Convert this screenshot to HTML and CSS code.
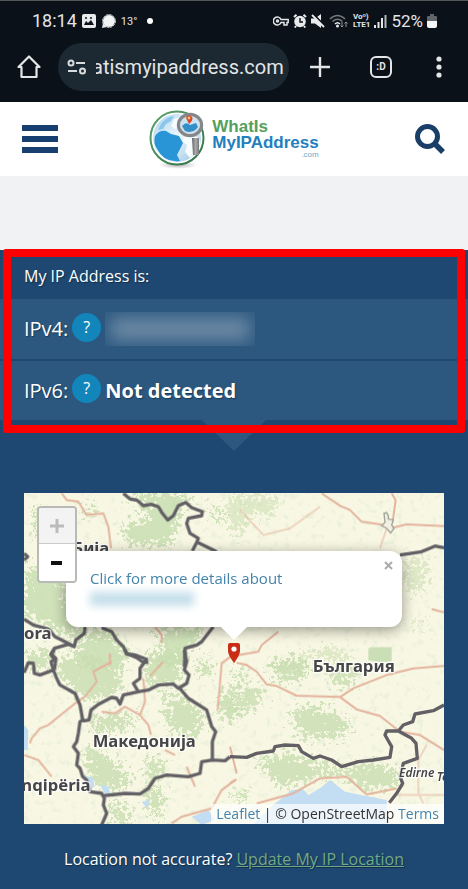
FILE: index.html
```html
<!DOCTYPE html>
<html lang="en">
<head>
<meta charset="utf-8">
<meta name="viewport" content="width=device-width, initial-scale=1">
<title>What Is My IP Address</title>
<link rel="stylesheet" href="styles.css">
</head>
<body>
<header class="phone">
  <div class="status">
    <div class="status-left">
      <span class="clock">18:14</span>
      <svg width="14" height="14" viewBox="0 0 14 14"><rect width="14" height="14" rx="2" fill="#e8eaec"/><path d="M2 11L4 7L6 9L9 6L12 11Z" fill="#0b1118"/><circle cx="4" cy="4" r="1" fill="#0b1118"/><circle cx="9" cy="4" r="1" fill="#0b1118"/></svg>
      <svg width="15" height="15" viewBox="0 0 15 15"><circle cx="8" cy="7" r="6" fill="#f1f3f4"/><circle cx="8" cy="7" r="6.400" fill="none" stroke="#e1e4e6" stroke-dasharray="2.500 .800"/><path d="M2 9L1 14L6 13Z" fill="#e8eaec"/></svg>
      <span class="temp">13°</span>
      <i class="dot"></i>
    </div>
    <div class="status-right">
      <svg width="16" height="12" viewBox="0 0 16 12" fill="none" stroke="#e3e5e7" stroke-width="1.5"><path d="M8 4.5A4 4 0 1 0 8 7.5H11V10H14V7.5H15.2V4.5Z"/><circle cx="4.5" cy="6" r="1"/></svg>
      <svg width="14" height="14" viewBox="0 0 14 14"><circle cx="7" cy="7.500" r="5.800" fill="#e8eaec"/><path d="M1 3L3.500 .8M13 3L10.500 .8M3 12L1.800 13.500M11 12L12.200 13.500" stroke="#e8eaec" stroke-width="2"/><path d="M7 4V8H10" fill="none" stroke="#0b1118" stroke-width="1.400"/></svg>
      <svg width="14" height="14" viewBox="0 0 14 14"><path d="M0 4.500H4L10 0V14L4 9.500H0Z" fill="#e8eaec"/><path d="M1 -1L15 13" stroke="#0b1118" stroke-width="2"/><path d="M1 1L13 13" stroke="#e8eaec" stroke-width="1.800"/></svg>
      <svg width="20" height="14" viewBox="0 0 20 14" fill="none"><path d="M1 5Q8.500 -2 16 5M3.500 7.500Q8.500 3 13.500 7.500" stroke="#71777c" stroke-width="1.600"/><path d="M6 10Q8.500 7.500 11 10" stroke="#e8eaec" stroke-width="1.600"/><circle cx="8.500" cy="12" r="1.500" fill="#e8eaec"/><path d="M13 8V13M11.500 11.500L13 13L14.500 11.500M17 13V8M15.500 9.500L17 8L18.500 9.500" stroke="#8d9296"/></svg>
      <span class="volte">Voᵒ)<br>LTE1</span>
      <svg width="13" height="13" viewBox="0 0 13 13" fill="#e3e5e7"><path d="M0 10H2V13H0ZM3.500 7H5.500V13H3.500ZM7 3H9V13H7Z"/><path d="M10.500 0H12.500V13H10.500Z" fill="#b4b8bb"/></svg>
      <span class="percent">52%</span>
      <svg width="10" height="14" viewBox="0 0 10 14"><path d="M3 0H7V2H9Q10 2 10 3V7H0V3Q0 2 1 2H3Z" fill="#5f656a"/><path d="M0 7H10V12Q10 14 8 14H2Q0 14 0 12Z" fill="#f4f5f6"/></svg>
    </div>
  </div>
  <nav class="browser" aria-label="Browser">
    <button class="tool home" aria-label="Home"><svg width="24" height="24" viewBox="0 0 24 24" fill="none" stroke="#e3e5e7" stroke-width="2.200" stroke-linejoin="round"><path d="M1.500 12L12 1.500L22.500 12H19.500V22H4.500V12Z"/></svg></button>
    <div class="address">
      <svg width="20" height="16" viewBox="0 0 20 16" fill="none" stroke="#d8dcdf" stroke-width="2"><circle cx="4" cy="4" r="2.500"/><path d="M9 4H18M1 12H10"/><circle cx="15.500" cy="12" r="2.500"/></svg>
      <input class="url" aria-label="Address" value="atismyipaddress.com">
    </div>
    <button class="tool" aria-label="New tab"><svg width="20" height="20" viewBox="0 0 20 20"><path d="M10 0V20M0 10H20" stroke="#e3e5e7" stroke-width="2.400"/></svg></button>
    <button class="tool" aria-label="Tabs"><span class="tabs">:D</span></button>
    <button class="tool menu" aria-label="More"><svg width="6" height="22" viewBox="0 0 6 22" fill="#e3e5e7"><circle cx="3" cy="3" r="2.600"/><circle cx="3" cy="11" r="2.600"/><circle cx="3" cy="19" r="2.600"/></svg></button>
  </nav>
</header>

<div class="site-head">
  <button class="tool" aria-label="Menu"><svg width="36" height="28" viewBox="0 0 36 28"><path d="M0 0H36V6H0ZM0 11H36V17H0ZM0 22H36V28H0Z" fill="#173f70"/></svg></button>
  <a class="logo" href="#">
    <svg width="60" height="60" viewBox="0 0 60 60">
      <defs>
        <linearGradient id="rim" x1="0" y1="0" x2="1" y2="1"><stop offset="0" stop-color="#5fa36b"/><stop offset="1" stop-color="#2d7148"/></linearGradient>
        <linearGradient id="sea" x1="0" y1="0" x2="1" y2="1"><stop offset="0" stop-color="#a9d2ee"/><stop offset=".5" stop-color="#eef8fe"/><stop offset="1" stop-color="#8fbfe2"/></linearGradient>
        <radialGradient id="shade"><stop offset="0" stop-color="#777" stop-opacity=".6"/><stop offset="1" stop-color="#999" stop-opacity="0"/></radialGradient>
        <linearGradient id="grip"><stop offset="0" stop-color="#5e6062"/><stop offset=".5" stop-color="#aaa"/><stop offset="1" stop-color="#77797b"/></linearGradient>
      </defs>
      <ellipse cx="29" cy="56" rx="20" ry="4" fill="url(#shade)"/>
      <circle cx="28" cy="29" r="26.500" fill="#fff" stroke="url(#rim)" stroke-width="2"/>
      <circle cx="28" cy="29" r="24" fill="url(#sea)"/>
      <path d="M6 27Q10 21 17 22L22 25L30 27L34 34L30 42L28 46L31 52Q15 54 8 40Q4 34 6 27Z" fill="#2994d6"/>
      <path d="M12 15Q17 8 25 7L22 12L17 15L14 20L9 21Z" fill="#8cc6ea"/>
      <path d="M25 10L34 8L30 17L26 20L22 17ZM36 27L43 26L50 29L51 35Q48 43 41 49L36 43L38 36L33 32Z" fill="#f7fcff"/>
      <path d="M43 29H50V46H44Z" fill="url(#grip)"/>
      <ellipse cx="41" cy="16" rx="11.500" ry="10.500" fill="#c9e5f5" stroke="#85888b" stroke-width="3.400"/>
      <ellipse cx="41" cy="16" rx="9.500" ry="8.500" fill="none" stroke="#d7dadd"/>
      <path d="M33 17Q37 12 41 16L47 14L49 18Q44 25 36 22Z" fill="#348fc9"/>
      <path d="M40 15L37 9Q38 5 42 7Q45 9 42 13Z" fill="#d9482b"/><circle cx="40" cy="9" r="1.400" fill="#f6c36b"/>
    </svg>
    <span class="wordmark"><span class="what">WhatIs</span><span class="my">MyIPAddress</span><span class="com">.com</span></span>
  </a>
  <button class="tool" aria-label="Search"><svg width="30" height="30" viewBox="0 0 30 30" fill="none" stroke="#193f68"><circle cx="12.500" cy="12.500" r="10" stroke-width="5"/><path d="M20 20L28 28" stroke-width="5.500"/></svg></button>
</div>
<div class="ad"></div>

<main class="page">
  <section class="ip">
    <h1>My IP Address is:</h1>
    <div class="row"><span>IPv4:</span><button class="help" aria-label="About IPv4">?</button><span class="hidden-ip"><i></i></span></div>
    <div class="row"><span>IPv6:</span><button class="help" aria-label="About IPv6">?</button><strong>Not detected</strong></div>
    <i class="arrow"></i>
    <i class="highlight"></i>
  </section>

  <section class="map" aria-label="Map">
    <svg class="tiles" viewBox="0 0 1260 993" preserveAspectRatio="xMidYMid slice">
      <defs>
        <filter id="rough" x="-20%" y="-20%" width="140%" height="140%"><feTurbulence type="fractalNoise" baseFrequency=".08" numOctaves="4" seed="4" result="n"/><feDisplacementMap in="SourceGraphic" in2="n" scale="110" xChannelSelector="R" yChannelSelector="G"/><feGaussianBlur stdDeviation="2"/></filter>
        <filter id="speck" x="0" y="0" width="100%" height="100%"><feTurbulence type="fractalNoise" baseFrequency=".05" numOctaves="5" seed="8"/><feColorMatrix values="0 0 0 0 .76  0 0 0 0 .85  0 0 0 0 .66  6 0 0 0 -3.400"/></filter>
      </defs>
      <rect width="1260" height="993" fill="#f8f7e3"/>
      <rect width="1260" height="993" filter="url(#speck)" opacity=".5"/>
      <g filter="url(#rough)" fill="#c5dcae">
        <g transform="translate(-27 -24)" opacity=".8">
          <path d="M340 25H530L500 60L470 180H340L320 120L410 100ZM30 260L100 230L150 290L160 400L210 430L170 460L100 420L30 390ZM210 440L280 440L340 510L320 550H210L180 500ZM430 430H560L500 540H410L440 500ZM60 60L100 100L60 160ZM200 50L240 70L220 110ZM560 60L640 80L620 110Z"/>
        </g>
        <g transform="translate(618 -24)" opacity=".5">
          <path d="M0 30L150 40L120 100L60 80L30 160L0 130ZM530 220L600 230L570 330L520 300ZM220 500L300 485L340 500L360 530L240 520ZM130 540L220 510L240 560H120ZM540 405L590 415L560 430Z"/>
        </g>
        <g transform="translate(-27 471)" opacity=".75">
          <path d="M30 10L110 0L100 60L40 50ZM130 30L220 10L310 60L320 120L230 160L180 120L130 80ZM390 10L500 0L505 95L400 110ZM225 200L360 190L350 230L250 250ZM450 130L540 160L570 220L530 270L460 230ZM200 290L270 310L350 390L300 425L230 400ZM395 320L440 330L450 380L400 400ZM290 450L340 480L340 520H290ZM400 400L450 430L430 510L390 460ZM620 120L660 130V220L610 200ZM540 60L580 20L590 80Z"/>
        </g>
        <g transform="translate(618 471)" opacity=".75">
          <path d="M120 40L200 20L240 60L220 90L140 90ZM0 110L110 115L90 155L30 200H0V165L50 145L0 140ZM15 60L45 65V90L15 85ZM180 180L260 170L360 210L350 260L220 265ZM80 330L180 310L330 355L440 340L510 370L500 410L400 420L340 375L260 380L150 415ZM0 430L70 430L50 445H0ZM320 50H380L360 120L300 90Z"/>
        </g>
      </g>
      <path transform="translate(618 -24)" d="M415 490L425 486H485V528L455 532L415 526Z" fill="#cbdfb6"/>
      <g fill="#c3ddf3">
        <path transform="translate(618 471)" d="M130 465L185 420L220 418L235 435L270 415L300 390L345 425L470 450V530H60Z"/>
        <path transform="translate(-27 471)" d="M205 375L235 385L238 410L218 425ZM255 403L280 410L288 438L270 432ZM27 225L40 240L38 300H27ZM380 455L405 450L395 475ZM530 500L580 480L600 510L560 525Z"/>
      </g>
      <g fill="none" stroke="#e3b39d" stroke-width="6" stroke-linejoin="round">
        <path transform="translate(-27 -24)" d="M140 25L155 45L190 50L215 90L265 85L280 125L288 190M420 425L440 450V475M285 505V540"/>
        <path transform="translate(618 -24)" d="M275 25L330 62L360 75L395 110L450 118L490 128L530 118L642 123M485 25L497 45L488 110M0 515L85 500L95 480L145 440M605 372L642 382"/>
        <path transform="translate(618 -24)" d="M470 130L450 190M30 75L100 150L180 130L270 65" opacity=".5"/>
        <path transform="translate(-27 471)" d="M45 280L50 265L75 235L100 225L180 160L210 140L245 95L235 65L290 35M260 185L300 190L330 170L375 195L390 155L385 85M375 195L400 225L408 255M450 300L480 315M405 78L445 35M28 315L70 330L110 380M608 180L620 40L660 10M515 350L540 410M470 520L500 500L590 475L620 420L660 390"/>
        <path transform="translate(618 471)" d="M20 38L50 45L80 65L110 103L140 108L200 137L330 141L370 115L470 75L550 55L642 48M330 141L380 178L450 198L510 245L570 255L642 300M80 460L190 430L270 385L350 380L410 433L500 415M0 290L20 370M0 400L20 388"/>
        <path transform="translate(618 471)" d="M590 285L565 330V430L580 460M500 435H642" opacity=".5"/>
      </g>
      <g fill="none" stroke="#626065" stroke-width="10" stroke-linejoin="round">
        <path transform="translate(-27 -24)" d="M325 25L345 42L365 45L385 62L408 58L430 65L440 82L458 105L475 92L490 62L512 52L530 68L562 80L560 92L520 100L515 115L525 145L550 160L545 172L532 198M548 172L605 200M27 205L38 215L27 225M27 402L55 420L100 432L120 455L160 475L178 485M210 425L208 445L182 465L178 485L160 478L118 490L108 510L122 525L118 555M260 428L290 440L305 465L325 485L335 505L365 518L382 530L400 532M595 425L560 470L545 480L510 490L508 545"/>
        <path transform="translate(618 -24)" d="M510 210L575 200L615 183L642 188"/>
        <path transform="translate(-27 471)" d="M27 68L40 38L55 40L58 70L75 75L115 60L125 85L135 105L180 130L195 165L203 210L195 215L190 250L185 275L175 290L190 310L185 345L195 355L203 380L215 390L225 425L260 430L268 445L265 465L275 490L260 525M115 60L108 35L122 25L108 12L118 0M203 213L222 210L228 180L250 163L290 142L305 145L315 162L325 135L370 125L355 100L375 85L375 55L395 28L360 15L335 12L330 0M370 125L400 120L430 105L475 102L490 115L515 100L522 75L508 60L515 35L508 0M490 110L520 145L575 180L590 230L602 245L592 275V330L630 332L645 320M592 330L560 335L555 370L520 380L455 375L420 385L400 415L375 432L330 430L265 437"/>
        <path transform="translate(618 471)" d="M0 320L50 322L80 310L130 303L135 290L165 285L205 287L215 305L250 325L270 318L305 330L335 350L385 335L430 330L480 322L485 290L465 255L470 243L505 243L520 225L548 215L555 192L610 182L642 165M505 243L545 265L558 280L562 325L520 340L510 380L518 400L500 430L478 458"/>
      </g>
      <path transform="translate(618 -24)" d="M462 85L470 83L475 92V102L490 105L485 120L492 130L482 144L470 130L455 122L465 112Z" fill="#f2efe3" stroke="#a1a398" stroke-width="4"/>
      <g class="labels">
        <text x="145" y="184">Бија</text>
        <text x="0" y="438">ora</text>
        <text x="206" y="762">Македонија</text>
        <text x="866" y="536">България</text>
        <text x="-8" y="894">nqipëria</text>
        <text class="city" x="1125" y="852">Edirne</text>
        <text class="city" x="1238" y="864">Te</text>
      </g>
    </svg>
    <div class="zoom"><button disabled aria-label="Zoom in"><svg width="14" height="14"><path d="M7 0V14M0 7H14" stroke="#bcbcbc" stroke-width="3"/></svg></button><button aria-label="Zoom out"><svg width="12" height="14"><path d="M0 7H11" stroke="#111" stroke-width="4"/></svg></button></div>
    <svg class="pin" width="14" height="22" viewBox="0 0 14 22"><path d="M1 3Q1 1 3 1H11Q13 1 13 3V9Q13 13 7 21Q1 13 1 9Z" fill="#c92d16"/><circle cx="7" cy="7" r="2.600" fill="#fff"/></svg>
    <div class="popup">
      <a href="#">Click for more details about</a>
      <i class="hidden-detail"></i>
      <button class="close" aria-label="Close popup"><svg width="9" height="9"><path d="M1 1L8 8M8 1L1 8" stroke="#aaa" stroke-width="2"/></svg></button>
    </div>
    <div class="credit"><a href="#">Leaflet</a> | © OpenStreetMap <a href="#">Terms</a></div>
  </section>
  <p class="accuracy">Location not accurate? <a href="#">Update My IP Location</a></p>
</main>
</body>
</html>
```
FILE: styles.css
```css
* { box-sizing: border-box; }
body { margin: 0; min-height: 100vh; display: flex; flex-direction: column; background: #1e4871; color: #fff; font-family: "Open Sans", "Noto Sans", sans-serif; }
svg { display: block; flex: none; }
button { border: 0; padding: 0; background: none; font-family: inherit; }
a { text-decoration: none; }

.phone { background: #0b1118; border-top: 1px solid #54575a; font-family: Roboto, sans-serif; color: #e3e5e7; }
.status { height: 40px; display: flex; justify-content: space-between; align-items: center; padding: 0 31px 0 32px; }
.status-left, .status-right { display: flex; align-items: center; gap: 5px; }
.clock { font-size: 18px; line-height: 20px; }
.temp { font-size: 11px; }
.dot { width: 6px; height: 6px; margin-left: 5px; border-radius: 50%; background: #fff; }
.status-right { gap: 4px; }
.volte { font-size: 8px; line-height: 8px; font-weight: 700; }
.percent { font-size: 17px; line-height: 20px; }
.browser { height: 61px; display: flex; align-items: center; padding: 0 26px 9px 17px; gap: 17px; }
.tool { flex: none; display: flex; align-items: center; justify-content: center; }
.browser .tool { width: 28px; margin-right: 16px; }
.browser .home { width: 24px; margin: 0; }
.browser .menu { width: 6px; margin: 0 0 0 8px; }
.address { flex: 1; min-width: 0; height: 48px; padding: 0 4px 0 9px; border-radius: 24px; background: #1c2932; display: flex; align-items: center; gap: 9px; }
.url { flex: 1; min-width: 0; padding: 0; border: 0; background: none; outline: 0; color: #e3e5e7; font: 20px/24px Roboto, sans-serif; text-indent: -4px; }
.tabs { width: 22px; height: 22px; border: 2px solid #e3e5e7; border-radius: 6px; color: #e3e5e7; font: 700 10px/18px Roboto, sans-serif; }

.site-head { height: 74px; padding: 0 23px 0 22px; background: #fff; display: flex; align-items: center; justify-content: space-between; }
.logo { display: flex; align-items: center; gap: 3px; padding-right: 5px; }
.wordmark { display: flex; flex-direction: column; font-family: "Liberation Sans", sans-serif; font-weight: 700; }
.what { font-size: 17px; line-height: 16px; color: #55a05d; }
.my { font-size: 17px; line-height: 16px; color: #2380bd; }
.com { align-self: flex-end; font-size: 8px; line-height: 8px; font-weight: 400; color: #6da6c8; }
.ad { height: 74px; background: #f1f2f4; }

.page { flex: 1; background: #1e4871; padding-bottom: 16px; }
.ip { position: relative; }
.ip h1 { margin: 0; padding: 14px 24px 11px; font-size: 16px; line-height: 24px; font-weight: 400; text-shadow: 1px 1px 1px #12304d; }
.row { height: 60px; padding: 0 24px; display: flex; align-items: center; gap: 4px; background: #2c587f; font-size: 20px; line-height: 28px; text-shadow: 1px 1px 1px #163b5c; }
.row + .row { height: 61px; border-top: 2px solid #1e4871; }
.help { width: 29px; height: 29px; margin-bottom: 4px; border-radius: 50%; background: #1285bb; color: #fff; font-size: 16px; line-height: 29px; }
.hidden-ip { width: 150px; height: 34px; overflow: hidden; background: #315c83; padding: 6px; }
.hidden-ip i { display: block; height: 22px; background: #6b89a4; filter: blur(8px); }
.arrow { position: absolute; left: 50%; top: 100%; width: 64px; height: 31px; transform: translateX(-50%); background: #2c587f; clip-path: polygon(0 0, 100% 0, 50% 100%); }
.highlight { position: absolute; inset: -1px 3px -13px; border: 8px solid #f00; border-radius: 3px; }

.map { position: relative; margin: 73px 24px 0; aspect-ratio: 420 / 331; overflow: hidden; color: #333; }
.tiles { width: 100%; height: 100%; }
.labels { font: 700 50px "Noto Sans", sans-serif; fill: #46464a; stroke: #fff; stroke-opacity: .75; stroke-width: 8px; paint-order: stroke; }
.labels .city { font-size: 36px; font-style: italic; font-weight: 600; }
.zoom { position: absolute; z-index: 2; left: 13px; top: 13px; width: 40px; border: 2px solid #b9b9b5; border-radius: 4px; overflow: hidden; }
.zoom button { width: 100%; height: 37px; display: flex; align-items: center; justify-content: center; background: #fff; }
.zoom button:disabled { height: 36px; background: #f3f3f3; border-bottom: 1px solid #ccc; }
.pin { position: absolute; left: 50%; bottom: 160px; transform: translateX(-50%); }
.popup { position: absolute; left: 50%; bottom: 197px; width: 80%; height: 76px; transform: translateX(-50%); padding: 17px 24px; border-radius: 12px; background: #fff; box-shadow: 0 3px 14px #0006; font-size: 15px; line-height: 20px; }
.popup::after { content: ""; position: absolute; left: 50%; top: 100%; width: 26px; height: 13px; transform: translateX(-50%); background: #fff; clip-path: polygon(0 0, 100% 0, 50% 100%); }
.popup a, .credit a { color: #4484ac; }
.hidden-detail { display: block; width: 104px; height: 14px; margin-top: 4px; background: #c4dfea; filter: blur(4px); }
.close { position: absolute; right: 9px; top: 10px; }
.credit { position: absolute; right: 0; bottom: 0; padding: 0 5px; background: #ffffffb3; font-size: 14px; line-height: 20px; white-space: nowrap; }
.accuracy { margin: 23px 0 0; text-align: center; font-size: 16px; line-height: 24px; text-shadow: 1px 1px 1px #12304d; }
.accuracy a { color: #72a985; text-decoration: underline; }
```
